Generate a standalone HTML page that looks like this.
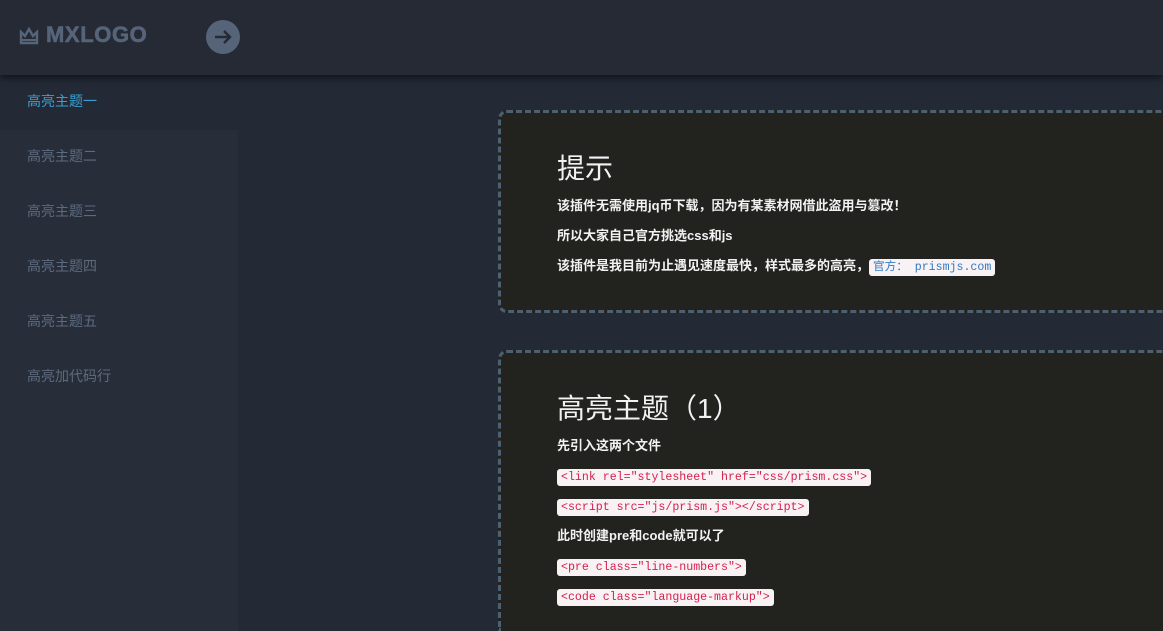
<!DOCTYPE html>
<html><head><meta charset="utf-8"><style>
*{margin:0;padding:0;box-sizing:border-box}
html{width:1163px;height:631px;overflow:hidden}
body{width:1163px;height:631px;overflow:hidden;background:#232a35;font-family:"Liberation Sans","Noto Sans CJK SC",sans-serif;position:relative}
.hd{position:absolute;left:0;top:0;width:1163px;height:75px;background:#252a35;box-shadow:0 3px 6px rgba(0,0,0,.5);z-index:2}
.logo{position:absolute;left:19px;top:22px;color:#56647a;font-weight:900;font-size:22px;letter-spacing:0.6px;-webkit-text-stroke:0.6px #56647a}
.logo svg{vertical-align:-3px;margin-right:7px}
.btn{position:absolute;left:206px;top:20px;width:34px;height:34px;border-radius:50%;background:#56647a}
.sb{position:absolute;left:0;top:75px;width:238px;height:556px;background:#272d39}
.it{height:55px;line-height:52px;padding-left:27px;font-size:14px;color:#5d6b7e}
.it.a{background:#232a35;color:#3a9fd4}
.card{position:absolute;left:498px;width:700px;background:#22221f;border:3px dashed #4c6070;border-radius:9px;padding:0 0 0 56px;color:#f2f2f2}
.c2{border-bottom:none;border-bottom-left-radius:0;border-bottom-right-radius:0}
h1{font-weight:normal;font-size:28px;line-height:34px}
p{font-size:13px;font-weight:bold;line-height:16px;height:16px;margin-top:14px}
p.f{margin-top:12px}
code{font-family:"Liberation Mono","DejaVu Sans Mono",monospace;font-weight:normal;font-size:11.6px;line-height:14px;background:#f9f2f4;color:#d6204c;padding:2px 4px;border-radius:3px}
code.b{color:#2f7bc5;font-family:"Liberation Mono","Noto Sans CJK SC",monospace}
</style></head><body>
<div class="hd">
<div class="logo"><svg width="20" height="18" viewBox="0 0 20 18"><path d="M2 5l4 4 4-7 4 7 4-4v11H2z" fill="none" stroke="#56647a" stroke-width="2.4"/><rect x="3" y="12" width="14" height="2" fill="#56647a"/></svg>MXLOGO</div>
<div class="btn"><svg width="34" height="34" viewBox="0 0 34 34"><path d="M9 17h15M18 11l6 6-6 6" fill="none" stroke="#252a35" stroke-width="2.4"/></svg></div>
</div>
<div class="sb">
<div class="it a">高亮主题一</div>
<div class="it">高亮主题二</div>
<div class="it">高亮主题三</div>
<div class="it">高亮主题四</div>
<div class="it">高亮主题五</div>
<div class="it">高亮加代码行</div>
</div>
<div class="card" style="top:110px;height:203px;padding-top:39px">
<h1>提示</h1>
<p class="f">该插件无需使用jq币下载，因为有某素材网借此盗用与篡改！</p>
<p>所以大家自己官方挑选css和js</p>
<p>该插件是我目前为止遇见速度最快，样式最多的高亮，<code class="b">官方： prismjs.com</code></p>
</div>
<div class="card c2" style="top:350px;height:281px;padding-top:39px">
<h1>高亮主题（1）</h1>
<p class="f">先引入这两个文件</p>
<p><code>&lt;link rel="stylesheet" href="css/prism.css"&gt;</code></p>
<p><code>&lt;script src="js/prism.js"&gt;&lt;/script&gt;</code></p>
<p>此时创建pre和code就可以了</p>
<p><code>&lt;pre class="line-numbers"&gt;</code></p>
<p><code>&lt;code class="language-markup"&gt;</code></p>
</div>
</body></html>
